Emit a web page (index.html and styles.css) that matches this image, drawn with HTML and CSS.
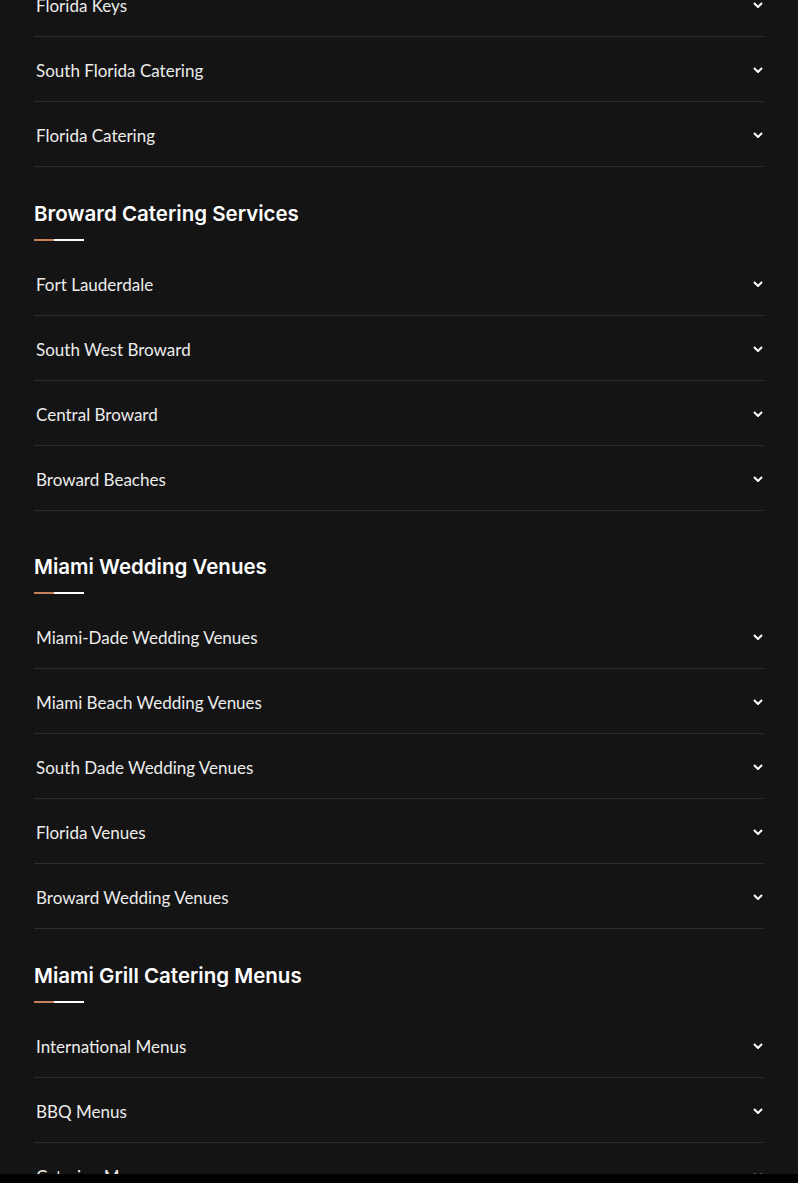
FILE: index.html
```html
<!DOCTYPE html>
<html>
<head>
	<meta charset="utf-8">
	<title>Catering Links</title>
	<link rel="stylesheet" href="styles.css">
</head>
<body>
	<div class="wrap">
		<ul class="menu first">
			<li><span>Florida Keys</span><svg class="arrow" viewBox="0 0 10 6"><polyline points="1,1 5,5 9,1"/></svg></li>
			<li><span>South Florida Catering</span><svg class="arrow" viewBox="0 0 10 6"><polyline points="1,1 5,5 9,1"/></svg></li>
			<li><span>Florida Catering</span><svg class="arrow" viewBox="0 0 10 6"><polyline points="1,1 5,5 9,1"/></svg></li>
		</ul>

		<h2 class="title">Broward Catering Services</h2>
		<ul class="menu">
			<li><span>Fort Lauderdale</span><svg class="arrow" viewBox="0 0 10 6"><polyline points="1,1 5,5 9,1"/></svg></li>
			<li><span>South West Broward</span><svg class="arrow" viewBox="0 0 10 6"><polyline points="1,1 5,5 9,1"/></svg></li>
			<li><span>Central Broward</span><svg class="arrow" viewBox="0 0 10 6"><polyline points="1,1 5,5 9,1"/></svg></li>
			<li><span>Broward Beaches</span><svg class="arrow" viewBox="0 0 10 6"><polyline points="1,1 5,5 9,1"/></svg></li>
		</ul>

		<h2 class="title wide">Miami Wedding Venues</h2>
		<ul class="menu">
			<li><span>Miami-Dade Wedding Venues</span><svg class="arrow" viewBox="0 0 10 6"><polyline points="1,1 5,5 9,1"/></svg></li>
			<li><span>Miami Beach Wedding Venues</span><svg class="arrow" viewBox="0 0 10 6"><polyline points="1,1 5,5 9,1"/></svg></li>
			<li><span>South Dade Wedding Venues</span><svg class="arrow" viewBox="0 0 10 6"><polyline points="1,1 5,5 9,1"/></svg></li>
			<li><span>Florida Venues</span><svg class="arrow" viewBox="0 0 10 6"><polyline points="1,1 5,5 9,1"/></svg></li>
			<li><span>Broward Wedding Venues</span><svg class="arrow" viewBox="0 0 10 6"><polyline points="1,1 5,5 9,1"/></svg></li>
		</ul>

		<h2 class="title">Miami Grill Catering Menus</h2>
		<ul class="menu">
			<li><span>International Menus</span><svg class="arrow" viewBox="0 0 10 6"><polyline points="1,1 5,5 9,1"/></svg></li>
			<li><span>BBQ Menus</span><svg class="arrow" viewBox="0 0 10 6"><polyline points="1,1 5,5 9,1"/></svg></li>
			<li><span>Catering Menus</span><svg class="arrow" viewBox="0 0 10 6"><polyline points="1,1 5,5 9,1"/></svg></li>
		</ul>
	</div>
	<div class="bottombar"></div>
</body>
</html>
```

FILE: styles.css
```css
*{
	box-sizing: border-box;
}
body{
	margin: 0;
	background: #141414;
	color: #ececec;
	font-family: "Lato", "Noto Sans", sans-serif;
	overflow: hidden;
}
.wrap{
	width: 730px;
	margin: 0 0 0 34px;
}
.menu{
	list-style: none;
	margin: 0;
	padding: 0;
}
.menu.first{
	margin-top: -28px;
}
.menu li{
	display: flex;
	align-items: center;
	justify-content: space-between;
	height: 65px;
	padding: 3px 1px 0 2px;
	border-bottom: 1px solid #2c2c2c;
	font-size: 17px;
}
.arrow{
	width: 10px;
	height: 6px;
	margin-top: -2px;
	fill: none;
	stroke: #fff;
	stroke-width: 2;
}
.title{
	margin: 34px 0 10px;
	padding-bottom: 15px;
	font-family: "Inter", "Lato", sans-serif;
	font-size: 20.5px;
	line-height: 25px;
	font-weight: 600;
	color: #fff;
	position: relative;
}
.title.wide{
	margin-top: 43px;
}
.title:after{
	content: "";
	position: absolute;
	left: 0;
	bottom: 0;
	width: 50px;
	height: 2px;
	background: linear-gradient(to right, #c4825b 20px, #fff 20px);
}
.bottombar{
	position: fixed;
	left: 0;
	right: 0;
	bottom: 0;
	height: 9px;
	background: #000;
}
```
